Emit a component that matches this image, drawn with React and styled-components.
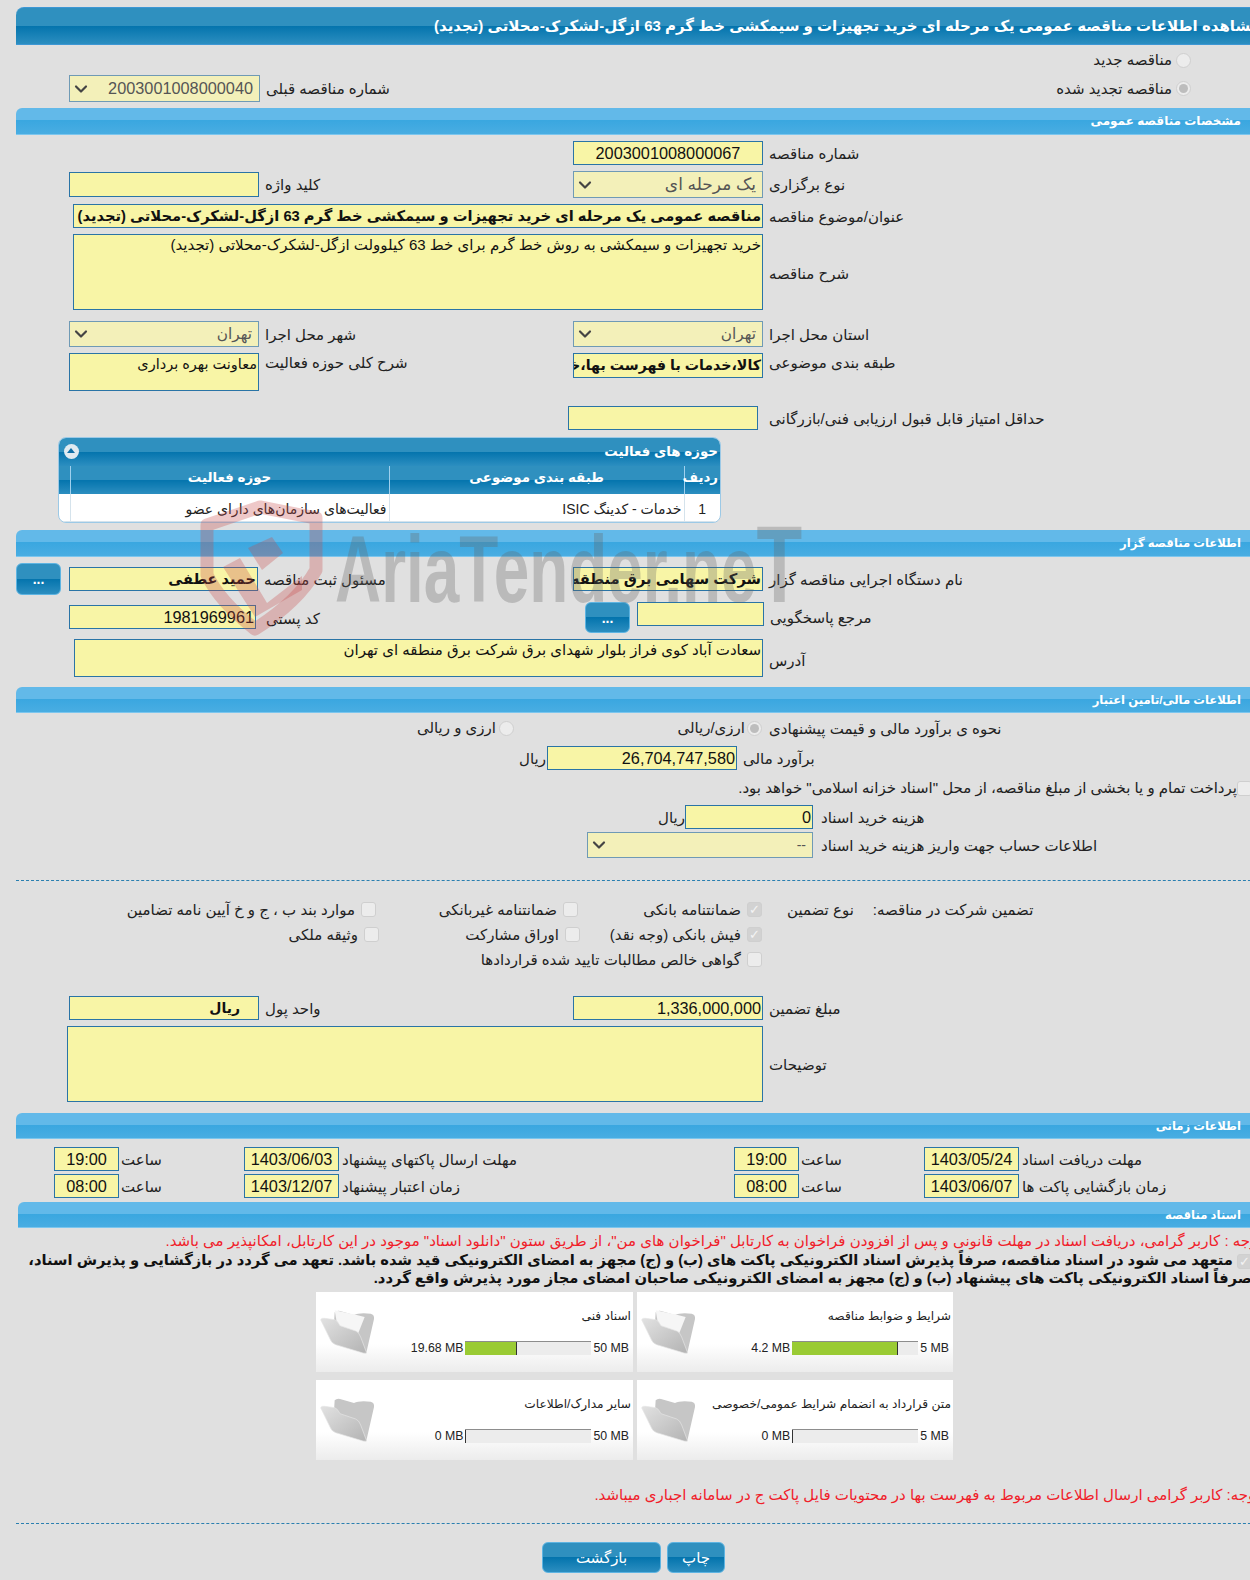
import React from 'react'
import styled, { createGlobalStyle } from 'styled-components'
import { ChevronDown } from 'lucide-react'

const GlobalStyle = createGlobalStyle`
    html, body {
        margin: 0;
        width: 1250px;
        height: 1580px;
        overflow: hidden;
        background: #e0e0e0;
    }
    body {
        font-family: "Liberation Sans", "DejaVu Sans", sans-serif;
        font-size: 15px;
        color: #222;
    }
`

const Canvas = styled.div`
    position: relative;
    width: 1250px;
    height: 1580px;
    overflow: hidden;
`
const Page = styled.div`
    position: relative;
    z-index: 1;
    width: 1270px;
    margin-left: 16px;
    padding-top: 7px;
`
const TitleBar = styled.h1`
    margin: 0;
    height: 38px;
    box-sizing: border-box;
    border-top: 1px solid #3d97d4;
    border-bottom: 1px solid #3d97d4;
    border-radius: 8px 0 0 0;
    background: linear-gradient(#2f90bf 0, #2f90bf 50%, #0474ad 50%, #2c8ec0 100%);
    color: #fff;
    font-size: 15px;
    font-weight: bold;
    line-height: 36px;
    direction: rtl;
    padding-right: 26px;
    white-space: nowrap;
`
const SectionBar = styled.div`
    margin-top: ${p => p.$mt}px;
    margin-left: ${p => p.$ml || 0}px;
    height: ${p => p.$h || 26}px;
    box-sizing: border-box;
    border-radius: 6px 0 0 0;
    background: linear-gradient(#62b9e9 0, #62b9e9 48%, #3aa7e0 48%, #49ade2 100%);
    border-bottom: 1px solid #7cc6ee;
    color: #fff;
    font-size: ${p => p.$size || 11.6}px;
    font-weight: bold;
    line-height: 26px;
    direction: rtl;
    padding-right: 45px;
`
const Line = styled.div`
    display: flex;
    align-items: ${p => p.$align || 'center'};
    margin-top: ${p => p.$mt || 0}px;
    height: ${p => p.$h || 24}px;
    padding-left: ${p => p.$indent || 0}px;
`
const LeftHalf = styled.div`
    display: flex;
    align-items: ${p => p.$align || 'center'};
    flex: none;
    box-sizing: border-box;
    width: ${p => p.$w || 504}px;
    height: 100%;
`
const RightHalf = styled.div`
    display: flex;
    align-items: ${p => p.$align || 'center'};
    flex: none;
    height: 100%;
`
const Label = styled.span`
    flex: none;
    direction: rtl;
    text-align: left;
    white-space: nowrap;
    font-size: 15px;
    margin-left: ${p => p.$ml ?? 6}px;
    width: ${p => (p.$w ? `${p.$w}px` : 'auto')};
    margin-top: ${p => p.$mtop ?? 1}px;
`
const Field = styled.div`
    flex: none;
    box-sizing: border-box;
    width: ${p => p.$w}px;
    height: ${p => p.$h || 24}px;
    background: #f8f5a6;
    border: 1px solid #2a74a6;
    direction: rtl;
    padding: ${p => (p.$multi ? '1px' : '0 1px')};
    padding-right: ${p => p.$pr || 1}px;
    font-size: ${p => p.$size || 16.3}px;
    line-height: ${p => (p.$multi ? '18px' : `${(p.$h || 24) - 2}px`)};
    font-weight: ${p => (p.$bold ? 'bold' : 'normal')};
    color: #111;
    white-space: ${p => (p.$multi ? 'normal' : 'nowrap')};
    overflow: hidden;
    margin-left: ${p => p.$ml || 0}px;
    margin-top: ${p => p.$mtop || 0}px;
    text-align: ${p => (p.$center ? 'center' : 'right')};
`
const SelectBox = styled.div`
    flex: none;
    display: flex;
    align-items: center;
    justify-content: space-between;
    box-sizing: border-box;
    width: ${p => p.$w}px;
    height: ${p => p.$h || 26}px;
    background: #f3f0b9;
    border: 1px solid #6f9ab5;
    padding: 0 6px 0 1px;
    color: #555;
    font-size: ${p => p.$size || 16.3}px;
    svg { color: #444; flex: none; }
`
const SelectText = styled.span`
    direction: rtl;
`
const Radio = styled.span`
    flex: none;
    display: inline-flex;
    align-items: center;
    justify-content: center;
    box-sizing: border-box;
    width: 15px;
    height: 15px;
    border-radius: 50%;
    border: 1px solid #cfcfcf;
    background: #ececec;
    &::after {
        content: '';
        width: 9px;
        height: 9px;
        border-radius: 50%;
        background: ${p => (p.$on ? '#bdbdbd' : 'transparent')};
    }
`
const Check = styled.span`
    flex: none;
    display: inline-flex;
    align-items: center;
    justify-content: center;
    box-sizing: border-box;
    width: 15px;
    height: 15px;
    border-radius: 3px;
    border: 1px solid #cfcfcf;
    background: ${p => (p.$on ? '#d2d2d2' : '#ececec')};
    color: #f4f4f4;
    vertical-align: middle;
    font-size: 13px;
    font-weight: bold;
    line-height: 1;
`
const RadioStack = styled.div`
    display: flex;
    box-sizing: border-box;
    align-items: center;
    justify-content: flex-start;
    direction: rtl;
    gap: ${p => p.$gap ?? 4}px;
    height: 100%;
    padding-right: ${p => p.$pr || 0}px;
    font-size: 15px;
    flex: ${p => (p.$grow ? 1 : 'none')};
    width: ${p => (p.$grow ? 'auto' : '100%')};
    white-space: nowrap;
`
const Option = styled.div`
    flex: none;
    display: flex;
    align-items: center;
    direction: rtl;
    gap: ${p => p.$gap ?? 6}px;
    width: ${p => p.$w}px;
    white-space: nowrap;
    font-size: 15px;
`
const SquareButton = styled.button`
    flex: none;
    width: ${p => p.$w || 45}px;
    height: ${p => p.$h || 32}px;
    padding: 0;
    border: 1px solid #5db4e2;
    border-radius: 6px;
    background: linear-gradient(#2f90bf 0, #2f90bf 50%, #0474ad 50%, #2c8ec0 100%);
    color: #fff;
    font-family: inherit;
    font-size: ${p => p.$size || 14}px;
    font-weight: ${p => p.$weight || 'bold'};
    direction: rtl;
`
const TableWrap = styled.div`
    width: 663px;
    margin: 7px 0 0 42px;
    height: 86px;
    box-sizing: border-box;
    border: 1px solid #9cc9e6;
    border-radius: 8px;
    overflow: hidden;
    background: #fff;
`
const TableTitle = styled.div`
    position: relative;
    height: 28px;
    background: linear-gradient(#2f90bf 0, #2f90bf 50%, #0474ad 50%, #2c8ec0 100%);
    color: #fff;
    font-size: 13.4px;
    font-weight: bold;
    line-height: 28px;
    direction: rtl;
    padding-right: 2px;
`
const CollapseIcon = styled.span`
    position: absolute;
    left: 5px;
    top: 6px;
    width: 15px;
    height: 15px;
    border-radius: 50%;
    background: #dfeaf1;
    &::after {
        content: '';
        position: absolute;
        left: 3px;
        top: 4px;
        border-left: 4.5px solid transparent;
        border-right: 4.5px solid transparent;
        border-bottom: 5px solid #0f6fa8;
    }
`
const Table = styled.table`
    width: 100%;
    border-collapse: collapse;
    table-layout: fixed;
    direction: rtl;
`
const HeadCell = styled.th`
    box-sizing: border-box;
    width: ${p => (p.$w ? `${p.$w}px` : 'auto')};
    height: 28px;
    padding: 0 2px 5px;
    background: linear-gradient(#2f90bf 0, #2f90bf 50%, #0474ad 50%, #2c8ec0 100%);
    border-left: 1px solid #9fd0ee;
    color: #fff;
    font-size: 13.4px;
    font-weight: bold;
    &:last-child { border-left: none; }
`
const BodyCell = styled.td`
    box-sizing: border-box;
    height: 27px;
    padding: 3px 2px 0;
    border-left: 1px solid #d5e3ec;
    border-bottom: 1px solid #d5e3ec;
    font-size: 14px;
    text-align: ${p => (p.$center ? 'center' : 'right')};
    white-space: nowrap;
    overflow: hidden;
    &:last-child { border-left: none; }
`
const DashedRule = styled.div`
    margin-top: ${p => p.$mt}px;
    border-top: 1px dashed #2a7fb0;
`
const RedNote = styled.div`
    margin-top: ${p => p.$mt}px;
    height: 20px;
    direction: rtl;
    white-space: nowrap;
    padding-right: ${p => p.$pr}px;
    color: #f0202a;
    font-size: 15px;
    line-height: 20px;
`
const BoldNote = styled.div`
    direction: rtl;
    white-space: nowrap;
    padding-right: 34px;
    font-size: 14.75px;
    font-weight: bold;
    line-height: 18px;
    color: #111;
`
const CardGrid = styled.div`
    display: grid;
    grid-template-columns: 317px 316px;
    grid-auto-rows: 80px;
    gap: 8px 4px;
    margin: 5px 0 0 300px;
    width: 637px;
`
const Card = styled.div`
    display: flex;
    box-sizing: border-box;
    padding: 14px 4px 0 3px;
    background: linear-gradient(#fff 0, #fff 65%, #ececec 100%);
`
const CardBody = styled.div`
    flex: 1;
    min-width: 0;
    direction: rtl;
`
const CardTitle = styled.div`
    font-size: 12.2px;
    height: 22px;
    line-height: 20px;
    white-space: nowrap;
    margin-right: -2px;
`
const UsageRow = styled.div`
    display: flex;
    align-items: center;
    direction: ltr;
    justify-content: flex-end;
    gap: 2px;
    margin-top: 12px;
    font-size: 12.3px;
    height: 16px;
    white-space: nowrap;
`
const UsageBar = styled.div`
    width: 126px;
    height: 14px;
    background: #ececec;
    border-top: 1px solid #8d8d8d;
    box-sizing: border-box;
`
const UsageFill = styled.div`
    height: 100%;
    background: #9acb34;
    border-right: 1px solid #333;
    box-sizing: border-box;
`
const ButtonRow = styled.div`
    display: flex;
    gap: 6px;
    margin: 18px 0 0 526px;
`
const FolderIcon = styled.svg`
    flex: none;
    margin-top: 2px;
`
const Watermark = styled.div`
    position: absolute;
    left: 198px;
    top: 498px;
    z-index: 2;
    display: flex;
    align-items: flex-start;
    pointer-events: none;
`
const WatermarkText = styled.span`
    display: block;
    margin: 11px 0 0 9px;
    font-size: 94px;
    font-weight: bold;
    line-height: 1;
    color: rgba(100, 100, 100, 0.3);
    white-space: nowrap;
    transform: scaleX(0.68);
    transform-origin: left center;
`
const WatermarkCap = styled.span`
    font-size: 110px;
`

function Shield(){
    return(
        <svg width="128" height="142" viewBox="0 0 128 142" fill="none">
            <path d="M9 27 L62 9 L118 20 L118 72 Q100 104 57 131 Q22 104 9 77 Z" stroke="rgba(200,74,74,0.3)" strokeWidth="13" strokeLinejoin="round" />
            <path d="M25 69 L42 60 L69 105 L104 78 L104 92 L57 119 Z" fill="rgba(200,74,74,0.3)" />
            <path d="M50 50 L74 39 L85 55 L64 72 Z" fill="rgba(200,74,74,0.3)" />
        </svg>
    )
}

function Folder({ id, full }){
    return(
        <FolderIcon width="56" height="50" viewBox="15 35 168 150">
            <defs>
                <linearGradient id={id} x1="0" y1="0" x2="1" y2="1">
                    <stop offset="0" stopColor="#e2e2e2" />
                    <stop offset="1" stopColor="#b3b3b3" />
                </linearGradient>
            </defs>
            <path d="M62 48 Q68 42 78 44 L120 56 Q135 48 170 52 Q182 55 180 68 L158 165 Q155 172 148 168 L60 80 Z" fill="#c6c6c6" />
            {full && <path d="M62 42 L125 55 L152 62 L132 112 L70 88 Z" fill="#f6f6f6" />}
            <path d="M20 70 Q22 64 32 66 L62 70 Q70 72 78 88 L125 104 Q135 108 140 122 L158 170 Q150 172 140 168 L65 145 Q52 140 48 128 Z" fill={`url(#${id})`} stroke="#e6e6e6" strokeWidth="2" />
        </FolderIcon>
    )
}

function Usage({ used, limit, percent }){
    return(
        <UsageRow>
            <span>{used}</span>
            <UsageBar>
                <UsageFill style={{ width: `${percent}%`, minWidth: 1 }} />
            </UsageBar>
            <span>{limit}</span>
        </UsageRow>
    )
}

function DocCard({ id, title, used, limit, percent, full }){
    return(
        <Card>
            <Folder id={id} full={full} />
            <CardBody>
                <CardTitle>{title}</CardTitle>
                <Usage used={used} limit={limit} percent={percent} />
            </CardBody>
        </Card>
    )
}

function Select({ w, h, size, children }){
    return(
        <SelectBox $w={w} $h={h} $size={size}>
            <ChevronDown size={20} strokeWidth={2.6} />
            <SelectText>{children}</SelectText>
        </SelectBox>
    )
}

export default function App(){
    return(
        <Canvas>
            <GlobalStyle />
            <Watermark>
                <Shield />
                <WatermarkText>AriaTender.ne<WatermarkCap>T</WatermarkCap></WatermarkText>
            </Watermark>
            <Page>
                <TitleBar>مشاهده اطلاعات مناقصه عمومی یک مرحله ای خرید تجهیزات و سیمکشی خط گرم 63 ازگل-لشکرک-محلاتی (تجدید)</TitleBar>

                <Line $mt={4} $h={22}>
                    <RadioStack $pr={95}>
                        <Radio /> مناقصه جدید
                    </RadioStack>
                </Line>
                <Line $mt={4} $h={27} $indent={53}>
                    <Select w={191} h={27}>2003001008000040</Select>
                    <Label>شماره مناقصه قبلی</Label>
                    <RadioStack $pr={95} $grow>
                        <Radio $on /> مناقصه تجدید شده
                    </RadioStack>
                </Line>

                <SectionBar $mt={6} $h={27} $size={12}>مشخصات مناقصه عمومی</SectionBar>

                <Line $mt={6} $indent={53}>
                    <LeftHalf />
                    <Field $w={190} $center>2003001008000067</Field>
                    <Label>شماره مناقصه</Label>
                </Line>
                <Line $mt={6} $h={27} $indent={53}>
                    <LeftHalf>
                        <Field $w={190} $h={25}></Field>
                        <Label>کلید واژه</Label>
                    </LeftHalf>
                    <Select w={190} h={27} size={17}>یک مرحله ای</Select>
                    <Label>نوع برگزاری</Label>
                </Line>
                <Line $mt={6} $indent={57}>
                    <Field $w={690} $bold $size={14.7}>مناقصه عمومی یک مرحله ای خرید تجهیزات و سیمکشی خط گرم 63 ازگل-لشکرک-محلاتی (تجدید)</Field>
                    <Label>عنوان/موضوع مناقصه</Label>
                </Line>
                <Line $mt={6} $h={76} $indent={57}>
                    <Field $w={690} $h={76} $multi $size={15}>خرید تجهیزات و سیمکشی به روش خط گرم برای خط 63 کیلوولت ازگل-لشکرک-محلاتی (تجدید)</Field>
                    <Label $mtop={4}>شرح مناقصه</Label>
                </Line>
                <Line $mt={11} $h={26} $indent={53}>
                    <LeftHalf>
                        <Select w={190} size={15.3}>تهران</Select>
                        <Label>شهر محل اجرا</Label>
                    </LeftHalf>
                    <Select w={190} size={15.3}>تهران</Select>
                    <Label>استان محل اجرا</Label>
                </Line>
                <Line $mt={6} $h={38} $indent={53} $align="flex-start">
                    <LeftHalf $align="flex-start">
                        <Field $w={190} $h={38} $multi $size={14.5}>معاونت بهره برداری</Field>
                        <Label>شرح کلی حوزه فعالیت</Label>
                    </LeftHalf>
                    <RightHalf $align="flex-start">
                        <Field $w={190} $h={25} $bold $size={14.2}>کالا،خدمات با فهرست بها،خدمات مشاوره</Field>
                        <Label>طبقه بندی موضوعی</Label>
                    </RightHalf>
                </Line>
                <Line $mt={15} $indent={552}>
                    <Field $w={190}></Field>
                    <Label $ml={11}>حداقل امتیاز قابل قبول ارزیابی فنی/بازرگانی</Label>
                </Line>

                <TableWrap>
                    <TableTitle>
                        <CollapseIcon />
                        حوزه های فعالیت
                    </TableTitle>
                    <Table>
                        <thead>
                            <tr>
                                <HeadCell $w={36}>ردیف</HeadCell>
                                <HeadCell $w={295}>طبقه بندی موضوعی</HeadCell>
                                <HeadCell $w={319}>حوزه فعالیت</HeadCell>
                                <HeadCell />
                            </tr>
                        </thead>
                        <tbody>
                            <tr>
                                <BodyCell $center>1</BodyCell>
                                <BodyCell>خدمات - کدینگ ISIC</BodyCell>
                                <BodyCell>فعالیت‌های سازمان‌های دارای عضو</BodyCell>
                                <BodyCell />
                            </tr>
                        </tbody>
                    </Table>
                </TableWrap>

                <SectionBar $mt={7} $h={27}>اطلاعات مناقصه گزار</SectionBar>

                <Line $mt={6} $h={32}>
                    <LeftHalf $w={557}>
                        <SquareButton>...</SquareButton>
                        <Field $w={189} $ml={8} $bold $size={14.5}>حمید عطفی</Field>
                        <Label>مسئول ثبت مناقصه</Label>
                    </LeftHalf>
                    <Field $w={190} $bold $size={14.7}>شرکت سهامی برق منطقه ای تهران</Field>
                    <Label>نام دستگاه اجرایی مناقصه گزار</Label>
                </Line>
                <Line $mt={7} $h={31} $indent={53} $align="flex-start">
                    <LeftHalf $w={516} $align="flex-start">
                        <Field $w={187} $mtop={3}>1981969961</Field>
                        <Label $ml={10} $mtop={8}>کد پستی</Label>
                    </LeftHalf>
                    <SquareButton $h={31}>...</SquareButton>
                    <Field $w={127} $ml={7}></Field>
                    <Label $mtop={7}>مرجع پاسخگویی</Label>
                </Line>
                <Line $mt={6} $h={38} $indent={58}>
                    <Field $w={689} $h={38} $multi $size={15}>سعادت آباد کوی فراز بلوار شهدای برق شرکت برق منطقه ای تهران</Field>
                    <Label $mtop={5}>آدرس</Label>
                </Line>

                <SectionBar $mt={10}>اطلاعات مالی/تامین اعتبار</SectionBar>

                <Line $mt={4} $h={22} $indent={388}>
                    <Option $w={110} $gap={3}>
                        <Radio />ارزی و ریالی
                    </Option>
                    <Option $w={248} $gap={2}>
                        <Radio $on />ارزی/ریالی
                    </Option>
                    <Label $ml={7}>نحوه ی برآورد مالی و قیمت پیشنهادی</Label>
                </Line>
                <Line $mt={7} $indent={503}>
                    <Label $ml={0} $w={28}>ریال</Label>
                    <Field $w={190}>26,704,747,580</Field>
                    <Label>برآورد مالی</Label>
                </Line>
                <Line $h={24} $mt={6}>
                    <RadioStack $pr={34} $gap={0}>
                        <Check />
                        پرداخت تمام و یا بخشی از مبلغ مناقصه، از محل "اسناد خزانه اسلامی" خواهد بود.
                    </RadioStack>
                </Line>
                <Line $mt={5} $indent={649}>
                    <Label $ml={0} $w={20}>ریال</Label>
                    <Field $w={128}>0</Field>
                    <Label $ml={8}>هزینه خرید اسناد</Label>
                </Line>
                <Line $mt={3} $h={26} $indent={571}>
                    <Select w={226} size={14}>--</Select>
                    <Label $ml={8}>اطلاعات حساب جهت واریز هزینه خرید اسناد</Label>
                </Line>

                <DashedRule $mt={22} />

                <Line $mt={16} $h={25} $indent={85}>
                    <Option $w={275}><Check />موارد بند ب ، ج و خ آیین نامه تضامین</Option>
                    <Option $w={202}><Check />ضمانتنامه غیربانکی</Option>
                    <Option $w={184}><Check $on>✓</Check>ضمانتنامه بانکی</Option>
                    <Label $ml={25}>نوع تضمین</Label>
                    <Label $ml={19}>تضمین شرکت در مناقصه:</Label>
                </Line>
                <Line $h={25} $indent={88}>
                    <Option $w={275}><Check />وثیقه ملکی</Option>
                    <Option $w={201}><Check />اوراق مشارکت</Option>
                    <Option $w={182}><Check $on>✓</Check>فیش بانکی (وجه نقد)</Option>
                </Line>
                <Line $h={25} $indent={562}>
                    <Option $w={184}><Check />گواهی خالص مطالبات تایید شده قراردادها</Option>
                </Line>

                <Line $mt={24} $indent={53}>
                    <LeftHalf>
                        <Field $w={190} $bold $size={14} $pr={18}>ریال</Field>
                        <Label>واحد پول</Label>
                    </LeftHalf>
                    <Field $w={190}>1,336,000,000</Field>
                    <Label>مبلغ تضمین</Label>
                </Line>
                <Line $mt={6} $h={76} $indent={51}>
                    <Field $w={696} $h={76} $multi></Field>
                    <Label>توضیحات</Label>
                </Line>

                <SectionBar $mt={11}>اطلاعات زمانی</SectionBar>

                <Line $mt={8} $indent={38}>
                    <Field $w={65} $center>19:00</Field>
                    <Label $ml={2} $w={123}>ساعت</Label>
                    <Field $w={95} $center>1403/06/03</Field>
                    <Label $ml={3} $w={392}>مهلت ارسال پاکتهای پیشنهاد</Label>
                    <Field $w={65} $center>19:00</Field>
                    <Label $ml={2} $w={123}>ساعت</Label>
                    <Field $w={95} $center>1403/05/24</Field>
                    <Label $ml={3}>مهلت دریافت اسناد</Label>
                </Line>
                <Line $mt={3} $indent={38}>
                    <Field $w={65} $center>08:00</Field>
                    <Label $ml={2} $w={123}>ساعت</Label>
                    <Field $w={95} $center>1403/12/07</Field>
                    <Label $ml={3} $w={392}>زمان اعتبار پیشنهاد</Label>
                    <Field $w={65} $center>08:00</Field>
                    <Label $ml={2} $w={123}>ساعت</Label>
                    <Field $w={95} $center>1403/06/07</Field>
                    <Label $ml={3}>زمان بازگشایی پاکت ها</Label>
                </Line>

                <SectionBar $mt={4} $ml={2}>اسناد مناقصه</SectionBar>

                <RedNote $mt={3} $pr={24}>توجه : کاربر گرامی، دریافت اسناد در مهلت قانونی و پس از افزودن فراخوان به کارتابل "فراخوان های من"، از طریق ستون "دانلود اسناد" موجود در این کارتابل، امکانپذیر می باشد.</RedNote>
                <BoldNote>
                    <Check $on>✓</Check> متعهد می شود در اسناد مناقصه، صرفاً پذیرش اسناد الکترونیکی پاکت های (ب) و (ج) مجهز به امضای الکترونیکی قید شده باشد. تعهد می گردد در بازگشایی و پذیرش اسناد،
                    <br />
                    صرفاً اسناد الکترونیکی پاکت های پیشنهاد (ب) و (ج) مجهز به امضای الکترونیکی صاحبان امضای مجاز مورد پذیرش واقع گردد.
                </BoldNote>

                <CardGrid>
                    <DocCard id="fold-a" title="اسناد فنی" used="19.68 MB" limit="50 MB" percent={41} full />
                    <DocCard id="fold-b" title="شرایط و ضوابط مناقصه" used="4.2 MB" limit="5 MB" percent={84} full />
                    <DocCard id="fold-c" title="سایر مدارک/اطلاعات" used="0 MB" limit="50 MB" percent={0} />
                    <DocCard id="fold-d" title="متن قرارداد به انضمام شرایط عمومی/خصوصی" used="0 MB" limit="5 MB" percent={0} />
                </CardGrid>

                <RedNote $mt={25} $pr={26}>توجه: کاربر گرامی ارسال اطلاعات مربوط به فهرست بها در محتویات فایل پاکت ج در سامانه اجباری میباشد.</RedNote>

                <DashedRule $mt={18} />

                <ButtonRow>
                    <SquareButton $w={119} $h={31} $size={15} $weight="normal">بازگشت</SquareButton>
                    <SquareButton $w={58} $h={31} $size={15} $weight="normal">چاپ</SquareButton>
                </ButtonRow>
            </Page>
        </Canvas>
    )
}
